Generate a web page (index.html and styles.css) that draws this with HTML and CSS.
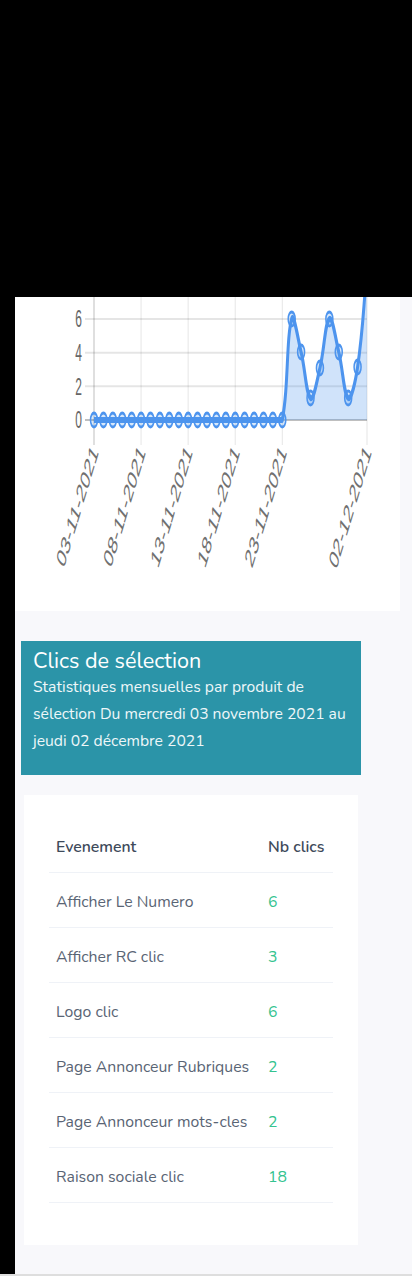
FILE: index.html
```html
<!DOCTYPE html>
<html lang="fr">
<head>
<meta charset="utf-8">
<title>Statistiques</title>
<link rel="stylesheet" href="styles.css">
</head>
<body>
<div class="topbar"></div>
<div class="layout">
  <aside class="side"></aside>
  <main class="main">
    <section class="chart-card">
      <svg class="chart" width="385" height="314" viewBox="15 297 385 314" xmlns="http://www.w3.org/2000/svg">
        <g transform="scale(1,2)">
          <g class="grid">
            <line x1="85" y1="142.68" x2="367" y2="142.68"/>
            <line x1="85" y1="159.51" x2="367" y2="159.51"/>
            <line x1="85" y1="176.34" x2="367" y2="176.34"/>
            <line x1="85" y1="193.17" x2="367" y2="193.17"/>
            <line x1="141.07" y1="100" x2="141.07" y2="222.5"/>
            <line x1="188.14" y1="100" x2="188.14" y2="222.5"/>
            <line x1="235.21" y1="100" x2="235.21" y2="222.5"/>
            <line x1="282.28" y1="100" x2="282.28" y2="222.5"/>
            <line x1="367" y1="100" x2="367" y2="222.5"/>
          </g>
          <g class="zero">
            <line x1="85" y1="210" x2="367" y2="210"/>
            <line x1="94" y1="100" x2="94" y2="222.5"/>
          </g>
          <g class="ylabels">
            <text x="82" y="159.51">6</text>
            <text x="82" y="176.34">4</text>
            <text x="82" y="193.17">2</text>
            <text x="82" y="210">0</text>
          </g>
          <g class="xlabels">
            <text transform="translate(95,224) rotate(-59)">03-11-2021</text>
            <text transform="translate(142.07,224) rotate(-59)">08-11-2021</text>
            <text transform="translate(189.14,224) rotate(-59)">13-11-2021</text>
            <text transform="translate(236.21,224) rotate(-59)">18-11-2021</text>
            <text transform="translate(283.28,224) rotate(-59)">23-11-2021</text>
            <text transform="translate(368,224) rotate(-59)">02-12-2021</text>
          </g>
          <path class="area" d="M 94 210 L 282.28 210 C 288.64 192.93, 286.19 169.43, 291.69 159.5 C 293.72 155.83, 297.84 169.15, 301.10 176 C 305.37 184.95, 306.12 197.13, 310.52 199 C 313.65 200.33, 316.91 190.36, 319.94 184 C 324.44 174.56, 324.98 161.36, 329.35 159.5 C 332.51 158.16, 335.50 169.15, 338.76 176 C 343.03 184.95, 343.82 197.27, 348.18 199 C 351.36 200.27, 355.57 190.37, 357.59 183.5 C 363.10 164.77, 363.24 154.4, 367 135 L 367 210 Z"/>
          <path class="line" d="M 94 210 L 282.28 210 C 288.64 192.93, 286.19 169.43, 291.69 159.5 C 293.72 155.83, 297.84 169.15, 301.10 176 C 305.37 184.95, 306.12 197.13, 310.52 199 C 313.65 200.33, 316.91 190.36, 319.94 184 C 324.44 174.56, 324.98 161.36, 329.35 159.5 C 332.51 158.16, 335.50 169.15, 338.76 176 C 343.03 184.95, 343.82 197.27, 348.18 199 C 351.36 200.27, 355.57 190.37, 357.59 183.5 C 363.10 164.77, 363.24 154.4, 367 135"/>
          <g class="pts">
            <circle cx="94" cy="210" r="3.5"/>
            <circle cx="103.41" cy="210" r="3.5"/>
            <circle cx="112.83" cy="210" r="3.5"/>
            <circle cx="122.24" cy="210" r="3.5"/>
            <circle cx="131.66" cy="210" r="3.5"/>
            <circle cx="141.07" cy="210" r="3.5"/>
            <circle cx="150.48" cy="210" r="3.5"/>
            <circle cx="159.90" cy="210" r="3.5"/>
            <circle cx="169.31" cy="210" r="3.5"/>
            <circle cx="178.73" cy="210" r="3.5"/>
            <circle cx="188.14" cy="210" r="3.5"/>
            <circle cx="197.55" cy="210" r="3.5"/>
            <circle cx="206.97" cy="210" r="3.5"/>
            <circle cx="216.38" cy="210" r="3.5"/>
            <circle cx="225.80" cy="210" r="3.5"/>
            <circle cx="235.21" cy="210" r="3.5"/>
            <circle cx="244.62" cy="210" r="3.5"/>
            <circle cx="254.04" cy="210" r="3.5"/>
            <circle cx="263.45" cy="210" r="3.5"/>
            <circle cx="272.87" cy="210" r="3.5"/>
            <circle cx="282.28" cy="210" r="3.5"/>
            <circle cx="291.69" cy="159.5" r="3.5"/>
            <circle cx="301.10" cy="176" r="3.5"/>
            <circle cx="310.52" cy="199" r="3.5"/>
            <circle cx="319.94" cy="184" r="3.5"/>
            <circle cx="329.35" cy="159.5" r="3.5"/>
            <circle cx="338.76" cy="176" r="3.5"/>
            <circle cx="348.18" cy="199" r="3.5"/>
            <circle cx="357.59" cy="183.5" r="3.5"/>
            <circle cx="367" cy="135" r="3.5"/>
          </g>
        </g>
      </svg>
    </section>

    <section class="banner">
      <h4 class="banner-title">Clics de sélection</h4>
      <p class="banner-text">Statistiques mensuelles par produit de sélection Du mercredi 03 novembre 2021 au jeudi 02 décembre 2021</p>
    </section>

    <section class="table-card">
      <table class="stats">
        <thead>
          <tr><th>Evenement</th><th>Nb clics</th></tr>
        </thead>
        <tbody>
          <tr><td>Afficher Le Numero</td><td class="num">6</td></tr>
          <tr><td>Afficher RC clic</td><td class="num">3</td></tr>
          <tr><td>Logo clic</td><td class="num">6</td></tr>
          <tr><td>Page Annonceur Rubriques</td><td class="num">2</td></tr>
          <tr><td>Page Annonceur mots-cles</td><td class="num">2</td></tr>
          <tr><td>Raison sociale clic</td><td class="num">18</td></tr>
        </tbody>
      </table>
    </section>
  </main>
</div>
<footer class="foot"></footer>
</body>
</html>
```

FILE: styles.css
```css
* { box-sizing: border-box; }

html, body {
  margin: 0;
  padding: 0;
}

body {
  background: #000;
  font-family: "Nunito", Lato, "Noto Sans", sans-serif;
  color: #495057;
}

.topbar {
  height: 297px;
  background: #000;
}

.layout {
  display: flex;
}

.side {
  width: 15px;
  flex: 0 0 15px;
  background: #000;
}

.main {
  flex: 1;
  background: #f8f8fb;
  padding-bottom: 29px;
}

.chart-card {
  background: #fff;
  margin-right: 12px;
  height: 314px;
}

.chart {
  display: block;
}

.grid line {
  stroke: rgba(0, 0, 0, 0.1);
  stroke-width: 1;
}

.zero line {
  stroke: rgba(0, 0, 0, 0.25);
  stroke-width: 1;
}

.ylabels text {
  font-family: "Liberation Sans", Arial, sans-serif;
  font-size: 12px;
  fill: #666;
  text-anchor: end;
  dominant-baseline: central;
}

.xlabels text {
  font-family: "Liberation Sans", Arial, sans-serif;
  font-size: 13.5px;
  fill: #707070;
  text-anchor: end;
  dominant-baseline: central;
}

.area {
  fill: rgba(74, 148, 236, 0.26);
  stroke: none;
}

.line {
  fill: none;
  stroke: #4d94ee;
  stroke-width: 3;
  stroke-linejoin: round;
}

.pts circle {
  fill: rgba(74, 148, 236, 0.22);
  stroke: #4d94ee;
  stroke-width: 1.5;
}

.banner {
  background: #2b94a8;
  color: #fff;
  margin: 30px 51px 0 6px;
  padding: 7px 12px 20px;
  min-height: 134px;
}

.banner-title {
  margin: 0;
  font-size: 21.6px;
  line-height: 26px;
  font-weight: 400;
}

.banner-text {
  margin: 0;
  font-size: 15.7px;
  line-height: 27px;
  color: #eef7f9;
}

.table-card {
  background: #fff;
  margin: 20px 54px 0 9px;
  padding: 23px 25px 26px;
}

.stats {
  width: 100%;
  border-collapse: collapse;
  margin-bottom: 16px;
  font-size: 15.8px;
  line-height: 22px;
}

.stats th,
.stats td {
  text-align: left;
  padding: 18px 7px 14px;
  border-bottom: 1px solid #eff2f7;
  white-space: nowrap;
}

.stats th {
  font-weight: 600;
  color: #3e4a5a;
}

.stats td {
  color: #596474;
}

.stats td.num {
  color: #34c38f;
}

.foot {
  height: 2px;
  background: #dedede;
}
```
